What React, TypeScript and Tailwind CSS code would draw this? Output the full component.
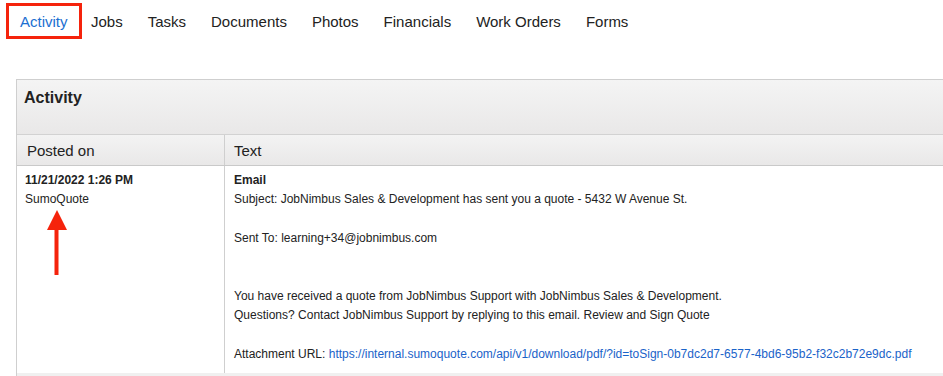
import React from "react";

const tabs = ["Jobs", "Tasks", "Documents", "Photos", "Financials", "Work Orders", "Forms"];

export default function App() {
  return (
    <div
      className="w-[943px] h-[376px] overflow-hidden bg-white text-[#222]"
      style={{ fontFamily: '"Liberation Sans", Arial, sans-serif' }}
    >
      {/* Tabs */}
      <div className="flex items-start h-[42px] pl-[6px] pt-[3px]">
        <div className="h-[36px] w-[76px] border-[3px] border-[#f5230c] flex items-center pl-[11px] pt-[3px] text-[15px] text-[#1c6fd1]">
          Activity
        </div>
        <div className="flex items-center h-[36px] pt-[3px] gap-[25px] ml-[9px] text-[15px] text-[#222]">
          {tabs.map((t) => (
            <span key={t}>{t}</span>
          ))}
        </div>
      </div>

      {/* Panel */}
      <div className="mt-[37px] ml-[16px] w-[960px] border-l border-t border-[#cfcfcf]">
        <div className="h-[55px] bg-gradient-to-b from-[#f4f4f4] to-[#e9e8e8] border-b border-[#d2d2d2] pl-[7px] pt-[6px] text-[16px] font-bold text-[#222]">
          Activity
        </div>
        <div className="flex h-[31px] bg-gradient-to-b from-[#f3f3f3] to-[#e9e8e8] border-b border-[#c9c9c9] text-[15px] text-[#222]">
          <div className="w-[208px] border-r border-[#cfcfcf] pl-[10px] pt-[5px]">Posted on</div>
          <div className="pl-[9px] pt-[5px]">Text</div>
        </div>
        <div className="flex text-[12px] leading-[19.3px] text-[#222]">
          <div className="relative w-[208px] border-r border-[#cfcfcf] pl-[8px] pt-[5px] h-[207px]">
            <div className="font-bold">11/21/2022 1:26 PM</div>
            <div>SumoQuote</div>
            <svg className="absolute left-[30px] top-[44px]" width="20" height="66" viewBox="0 0 20 66">
              <polygon points="10,0 20,20 0,20" fill="#f5230c" />
              <rect x="7.5" y="19" width="4" height="46" fill="#f5230c" />
            </svg>
          </div>
          <div className="pl-[9px] pt-[5px]">
            <div className="font-bold">Email</div>
            <div>Subject: JobNimbus Sales &amp; Development has sent you a quote - 5432 W Avenue St.</div>
            <div className="h-[19.3px]" />
            <div>Sent To: learning+34@jobnimbus.com</div>
            <div className="h-[19.3px]" />
            <div className="h-[19.3px]" />
            <div>You have received a quote from JobNimbus Support with JobNimbus Sales &amp; Development.</div>
            <div>Questions? Contact JobNimbus Support by replying to this email. Review and Sign Quote</div>
            <div className="h-[19.3px]" />
            <div>
              Attachment URL:{" "}
              <span className="text-[#1a63c9]">
                https://internal.sumoquote.com/api/v1/download/pdf/?id=toSign-0b7dc2d7-6577-4bd6-95b2-f32c2b72e9dc.pdf
              </span>
            </div>
          </div>
        </div>
        <div className="h-[10px] bg-[#f0f0f0]" />
      </div>
    </div>
  );
}
